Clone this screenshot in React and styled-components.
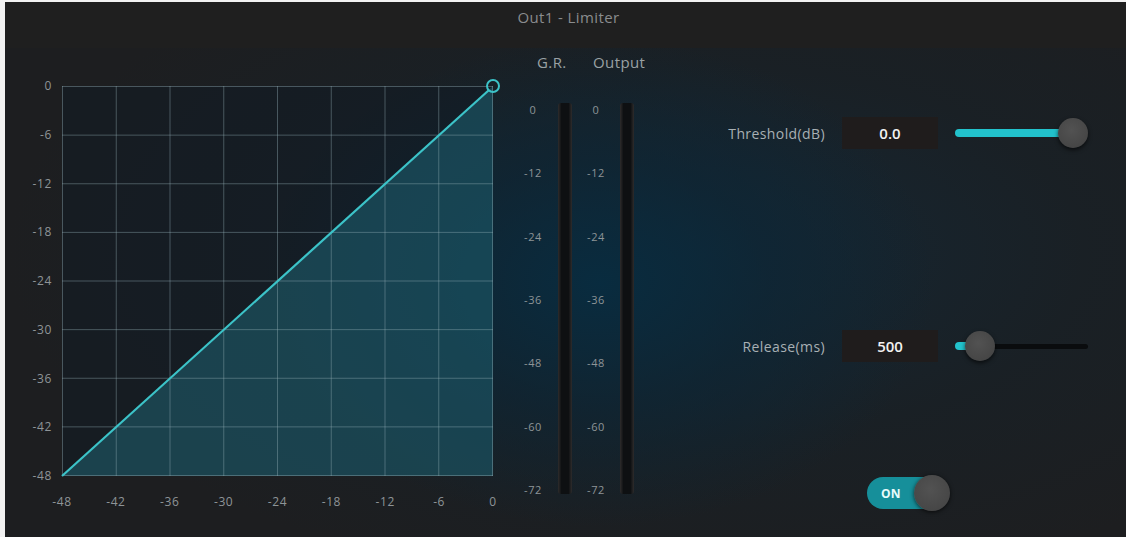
import React from 'react';
import styled, { createGlobalStyle } from 'styled-components';

const GlobalStyle = createGlobalStyle`
  html, body { margin: 0; padding: 0; background: #f2f2f2; }
  body { font-family: "Open Sans", "Noto Sans", sans-serif; }
  #root { padding: 2px 0 0 5px; }
`;

const Panel = styled.div`
  width: 1121px;
  height: 535px;
  display: flex;
  flex-direction: column;
  background: #1e1f21;
  overflow: hidden;
`;

const Header = styled.div`
  height: 46px;
  display: flex;
  justify-content: center;
  padding: 5px 0 0 6px;
  box-sizing: border-box;
  background: #1f1f1f;
`;

const Title = styled.div`
  font-size: 15px;
  line-height: 20px;
  letter-spacing: 0.4px;
  color: #8a8c8e;
`;

const Body = styled.div`
  flex: 1;
  display: flex;
  align-items: flex-start;
  background:
    radial-gradient(ellipse 30% 50% at 53% 48%, rgba(8, 44, 64, 0.95) 0%, rgba(12, 38, 54, 0.65) 50%, rgba(30, 31, 33, 0) 100%),
    radial-gradient(ellipse 62% 70% at 62% 42%, rgba(20, 40, 54, 0.9) 0%, rgba(22, 34, 42, 0.5) 55%, rgba(30, 31, 33, 0) 100%),
    #1d1e20;
`;

/* ---------- transfer curve ---------- */

const GraphGrid = styled.div`
  display: grid;
  grid-template-columns: 40px 431px;
  grid-template-rows: 390px auto;
  column-gap: 10px;
  row-gap: 19px;
  margin: 38px 0 0 7px;
`;

const YAxis = styled.div`
  display: flex;
  flex-direction: column;
  justify-content: space-between;
  align-items: flex-end;
  margin: -7px 0;
`;

const XAxis = styled.div`
  grid-column: 2;
  display: flex;
  justify-content: space-between;
  margin: 0 -15px;
`;

const Tick = styled.span`
  display: block;
  width: ${p => (p.$w ? `${p.$w}px` : 'auto')};
  text-align: center;
  font-size: ${p => p.$size || 12}px;
  letter-spacing: 0.6px;
  line-height: 14px;
  color: #8e9497;
`;

const PlotSvg = styled.svg`
  display: block;
  overflow: visible;
`;

const Y_TICKS = ['0', '-6', '-12', '-18', '-24', '-30', '-36', '-42', '-48'];
const X_TICKS = ['-48', '-42', '-36', '-30', '-24', '-18', '-12', '-6', '0'];

function TransferPlot({ w, h }) {
  const cols = Array.from({ length: 9 }, (_, i) => (i * (w - 1)) / 8 + 0.5);
  const rows = Array.from({ length: 9 }, (_, i) => (i * (h - 1)) / 8 + 0.5);
  return (
    <PlotSvg width={w} height={h} viewBox={`0 0 ${w} ${h}`}>
      <rect x="0" y="0" width={w} height={h} fill="rgba(16, 26, 36, 0.5)" />
      <polygon points={`0,${h} ${w},0 ${w},${h}`} fill="rgba(38, 140, 162, 0.34)" />
      {cols.map((x, i) => (
        <line key={`c${i}`} x1={x} y1="0" x2={x} y2={h} stroke="rgba(150, 178, 184, 0.4)" strokeWidth="1" />
      ))}
      {rows.map((y, i) => (
        <line key={`r${i}`} x1="0" y1={y} x2={w} y2={y} stroke="rgba(150, 178, 184, 0.4)" strokeWidth="1" />
      ))}
      <line x1="0" y1={h} x2={w - 4} y2={4} stroke="#3cc3c8" strokeWidth="2.2" />
      <circle cx={w} cy="0" r="6" fill="none" stroke="#3cc3c8" strokeWidth="2" />
    </PlotSvg>
  );
}

/* ---------- meters ---------- */

const Meters = styled.div`
  display: flex;
  gap: 12px;
  margin: 5px 0 0 28px;
`;

const Meter = styled.div`
  display: flex;
  flex-direction: column;
  width: ${p => p.$width}px;
`;

const MeterTitle = styled.div`
  font-size: 15px;
  line-height: 18px;
  letter-spacing: 0.4px;
  color: #9aa1a4;
  padding-left: ${p => p.$shift}px;
  margin-bottom: 32px;
  white-space: nowrap;
`;

const MeterBody = styled.div`
  display: flex;
  align-items: flex-start;
  gap: ${p => p.$gap}px;
`;

const Scale = styled.div`
  width: 24px;
  height: 394px;
  display: flex;
  flex-direction: column;
  justify-content: space-between;
  align-items: center;
`;

const Bar = styled.div`
  width: 14px;
  height: 391px;
  border-radius: 3px;
  background: linear-gradient(to right, #2e2c2c 0%, #0e1012 25%, #0e1012 75%, #2e2c2c 100%);
`;

const METER_TICKS = ['0', '-12', '-24', '-36', '-48', '-60', '-72'];

function LevelMeter({ title, shift, gap }) {
  return (
    <Meter $width={38 + gap}>
      <MeterTitle $shift={shift}>{title}</MeterTitle>
      <MeterBody $gap={gap}>
        <Scale>
          {METER_TICKS.map(t => (
            <Tick key={t} $size={11}>{t}</Tick>
          ))}
        </Scale>
        <Bar />
      </MeterBody>
    </Meter>
  );
}

/* ---------- parameter controls ---------- */

const Controls = styled.div`
  width: 370px;
  margin: 69px 0 0 84px;
  display: flex;
  flex-direction: column;
`;

const ParamRow = styled.div`
  display: grid;
  grid-template-columns: 1fr 96px 133px;
  column-gap: 17px;
  align-items: center;
  height: 32px;
  margin-bottom: ${p => p.$after}px;
`;

const ParamLabel = styled.div`
  text-align: right;
  font-size: 14px;
  letter-spacing: 0.4px;
  color: #a8b0b4;
  white-space: nowrap;
`;

const ValueBox = styled.div`
  height: 32px;
  display: flex;
  align-items: center;
  justify-content: center;
  background: #1f1c1c;
  font-size: 15px;
  font-weight: 600;
  color: #f2f2f2;
`;

const SliderTrack = styled.div`
  position: relative;
  height: 32px;
  display: flex;
  align-items: center;
`;

const TrackLine = styled.div`
  margin-left: 5px;
  flex: 1;
  height: 5px;
  border-radius: 3px;
  background: #0a0c0e;
`;

const TrackFill = styled.div`
  position: absolute;
  left: 0;
  top: 12px;
  height: 8px;
  border-radius: 4px;
  background: #22c2cc;
`;

const Knob = styled.div`
  position: absolute;
  top: 1px;
  width: 30px;
  height: 30px;
  margin-left: -15px;
  border-radius: 50%;
  background: radial-gradient(circle at 45% 40%, #525252 0%, #464646 70%, #3c3c3c 100%);
  box-shadow: 0 2px 4px rgba(0, 0, 0, 0.65);
`;

function Slider({ value, min, max, width = 133 }) {
  const frac = (value - min) / (max - min);
  const center = 15 + frac * (width - 30);
  return (
    <SliderTrack>
      <TrackLine />
      <TrackFill style={{ width: `${center}px` }} />
      <Knob style={{ left: `${center}px` }} />
    </SliderTrack>
  );
}

const ToggleRow = styled.div`
  display: flex;
  justify-content: center;
  padding: 2px 0 0 6px;
`;

const Toggle = styled.div`
  position: relative;
  width: 78px;
  height: 32px;
  border-radius: 16px;
  background: #168f9a;
  display: flex;
  align-items: center;
  padding-left: 14px;
  box-sizing: border-box;
  font-size: 12px;
  font-weight: 700;
  color: #e8fbfc;
  letter-spacing: 0.3px;
`;

const ToggleKnob = styled.div`
  position: absolute;
  right: -5px;
  top: -2px;
  width: 36px;
  height: 36px;
  border-radius: 50%;
  background: radial-gradient(circle at 45% 40%, #525252 0%, #474747 70%, #3d3d3d 100%);
  box-shadow: 0 1px 4px rgba(0, 0, 0, 0.7);
`;

export default function App() {
  return (
    <>
      <GlobalStyle />
      <Panel>
        <Header>
          <Title>Out1 - Limiter</Title>
        </Header>
        <Body>
          <GraphGrid>
            <YAxis>
              {Y_TICKS.map(t => (
                <Tick key={t}>{t}</Tick>
              ))}
            </YAxis>
            <TransferPlot w={431} h={390} />
            <XAxis>
              {X_TICKS.map(t => (
                <Tick key={t} $w={30}>{t}</Tick>
              ))}
            </XAxis>
          </GraphGrid>

          <Meters>
            <LevelMeter title="G.R." shift={16} gap={13} />
            <LevelMeter title="Output" shift={9} gap={12} />
          </Meters>

          <Controls>
            <ParamRow $after={181}>
              <ParamLabel>Threshold(dB)</ParamLabel>
              <ValueBox>0.0</ValueBox>
              <Slider value={0} min={-48} max={0} />
            </ParamRow>
            <ParamRow $after={113}>
              <ParamLabel>Release(ms)</ParamLabel>
              <ValueBox>500</ValueBox>
              <Slider value={500} min={10} max={5000} />
            </ParamRow>
            <ToggleRow>
              <Toggle>
                ON
                <ToggleKnob />
              </Toggle>
            </ToggleRow>
          </Controls>
        </Body>
      </Panel>
    </>
  );
}
